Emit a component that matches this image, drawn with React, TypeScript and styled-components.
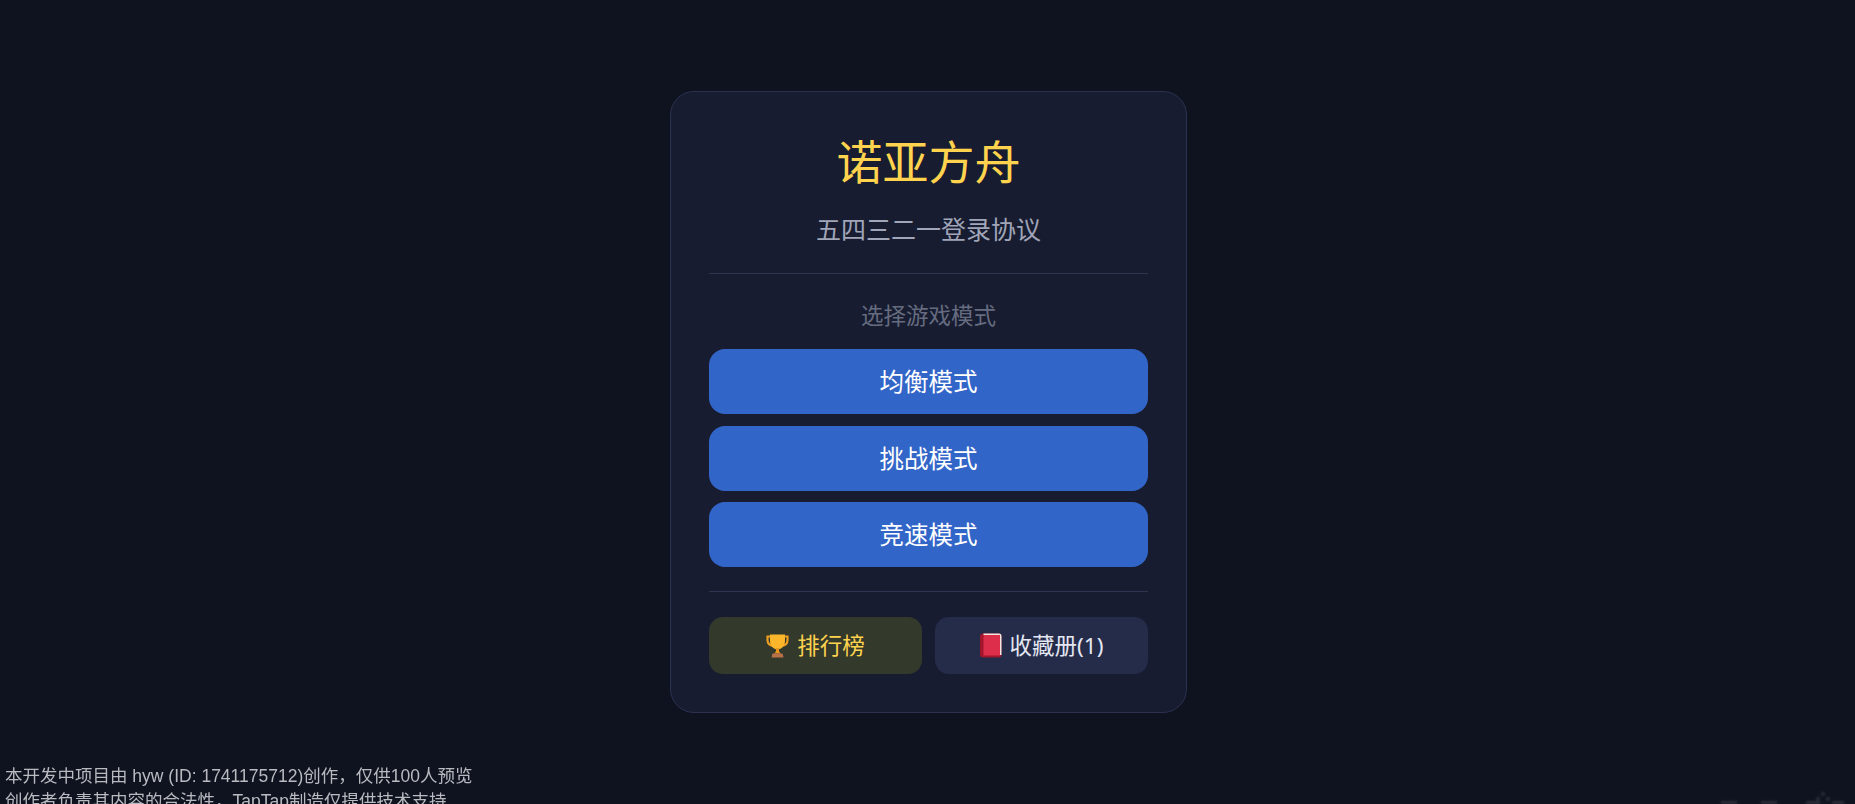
import React from 'react';
import styled, { createGlobalStyle } from 'styled-components';

const GlobalStyle = createGlobalStyle`
	html, body {
		margin: 0;
		padding: 0;
		height: 100%;
		overflow: hidden;
		background: #0f1320;
	}
	#root {
		height: 100%;
	}
`;

const Page = styled.div`
	display: flex;
	align-items: center;
	justify-content: center;
	box-sizing: border-box;
	height: 804px;
	padding-left: 2px;
	font-family: "Noto Sans", "Noto Sans CJK SC", sans-serif;
`;

const Card = styled.div`
	display: flex;
	flex-direction: column;
	box-sizing: border-box;
	width: 517px;
	height: 622px;
	padding: 0 38px;
	background: #171c30;
	border: 1px solid #2c3150;
	border-radius: 24px;
`;

const Title = styled.h1`
	margin: 44px 0 0;
	color: #ffd34e;
	font-size: 46px;
	font-weight: 400;
	line-height: 50px;
	text-align: center;
`;

const Subtitle = styled.p`
	margin: 26px 0 0;
	color: #a0a5b8;
	font-size: 25px;
	line-height: 34px;
	text-align: center;
`;

const Divider = styled.hr<{ $top: number }>`
	width: 100%;
	margin: ${props => props.$top}px 0 0;
	border: none;
	border-top: 1px solid #2f3450;
`;

const SectionLabel = styled.p`
	margin: 26px 0 0;
	color: #666c80;
	font-size: 22.5px;
	line-height: 32px;
	text-align: center;
`;

const ModeList = styled.div`
	display: flex;
	flex-direction: column;
	gap: 11.5px;
	margin-top: 17px;
`;

const ModeButton = styled.button`
	height: 65px;
	padding: 0 0 2px;
	background: #3265c8;
	border: none;
	border-radius: 16px;
	color: #ffffff;
	font-family: inherit;
	font-size: 24.5px;
	cursor: pointer;
`;

const BottomRow = styled.div`
	display: grid;
	grid-template-columns: 1fr 1fr;
	gap: 13px;
	margin-top: 25px;
`;

const BottomButton = styled.button<{ $gold?: boolean }>`
	display: flex;
	align-items: center;
	justify-content: center;
	gap: 8px;
	height: 57px;
	padding: 0;
	background: ${props => (props.$gold ? '#33392b' : '#252c4a')};
	border: none;
	border-radius: 14px;
	color: ${props => (props.$gold ? '#ffd34e' : '#e4e7f2')};
	font-family: inherit;
	font-size: 22.5px;
	cursor: pointer;
`;

const BottomLabel = styled.span`
	padding-bottom: 2px;
`;

const Notice = styled.div`
	position: fixed;
	left: 5px;
	top: 764px;
	color: #b8babf;
	font-family: "Liberation Sans", "Noto Sans CJK SC", sans-serif;
	font-size: 17.5px;
	line-height: 25px;
	white-space: nowrap;
`;

const Watermark = styled.svg`
	position: fixed;
	right: 0;
	bottom: 0;
	filter: blur(1px);
`;

const Trophy = () => (
	<svg width="23" height="24" viewBox="0 0 23 24">
		<path d="M5 2.5H1.5v3.5c0 3.5 2.5 5.5 6 6M18 2.5h3.5V6c0 3.5-2.5 5.5-6 6" fill="none" stroke="#ef9d1e" strokeWidth="2.2" />
		<path d="M4 0.5h15v6c0 5.5-3.4 9-7.5 9S4 12 4 6.500z" fill="#fbb62c" />
		<path d="M10 14h3v3l1.500 2.500h-6L10 17z" fill="#e8951c" />
		<path d="M6.500 19.500h10l1 4h-12z" fill="#b9714a" />
	</svg>
);

const Book = () => (
	<svg width="22" height="25" viewBox="0 0 22 25">
		<rect x="0" y="0.500" width="21.500" height="24" rx="3" fill="#a3152c" />
		<path d="M3.500 0.500h15.500a2.500 2.500 0 0 1 2.500 2.500v19h-1.500V2H3.500z" fill="#f0e6e0" />
		<rect x="3.500" y="2" width="16.500" height="20.500" fill="#dd2e4b" />
	</svg>
);

export default function App() {
	return (
		<Page>
			<GlobalStyle />
			<Card>
				<Title>诺亚方舟</Title>
				<Subtitle>五四三二一登录协议</Subtitle>
				<Divider $top={27} />
				<SectionLabel>选择游戏模式</SectionLabel>
				<ModeList>
					<ModeButton>均衡模式</ModeButton>
					<ModeButton>挑战模式</ModeButton>
					<ModeButton>竞速模式</ModeButton>
				</ModeList>
				<Divider $top={24} />
				<BottomRow>
					<BottomButton $gold><Trophy /><BottomLabel>排行榜</BottomLabel></BottomButton>
					<BottomButton><Book /><BottomLabel>收藏册(1)</BottomLabel></BottomButton>
				</BottomRow>
			</Card>
			<Notice>
				本开发中项目由 hyw (ID: 1741175712)创作，仅供100人预览<br />
				创作者负责其内容的合法性，TapTap制造仅提供技术支持
			</Notice>
			<Watermark width="145" height="20" viewBox="0 0 145 20" fill="#2b2e39">
				<rect x="11" y="17" width="16" height="3" />
				<rect x="51" y="17" width="16" height="3" />
				<rect x="96" y="17" width="14" height="3" />
				<rect x="122" y="17" width="12" height="3" />
				<circle cx="113" cy="10" r="2" />
				<circle cx="118" cy="15" r="2" />
				<circle cx="108" cy="15" r="2" />
			</Watermark>
		</Page>
	);
}
